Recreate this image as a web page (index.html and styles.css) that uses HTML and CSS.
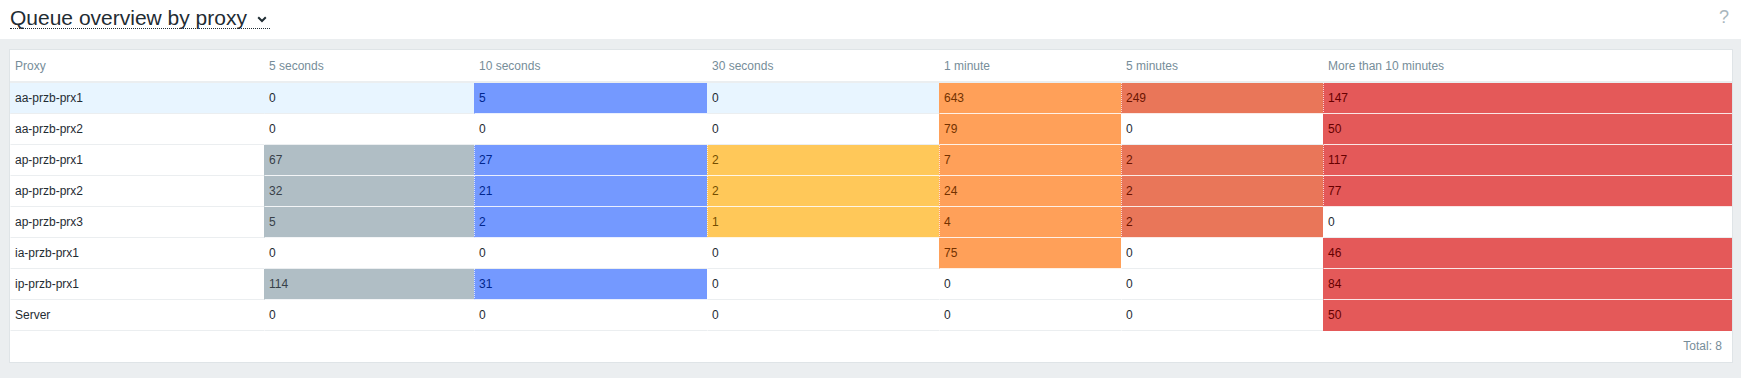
FILE: index.html
```html
<!DOCTYPE html>
<html lang="en">
<head>
<meta charset="utf-8">
<title>Queue overview by proxy</title>
<link rel="stylesheet" href="styles.css">
</head>
<body>
<header class="page-header">
  <h1 class="title"><span class="title-link">Queue overview by proxy<svg class="chevron" width="10" height="7" viewBox="0 0 10 7"><path d="M1.2 1.3 L5 5 L8.8 1.3" fill="none" stroke="#1f2c33" stroke-width="2"/></svg></span></h1>
  <span class="help">?</span>
</header>
<main class="content">
  <div class="panel">
    <table class="list">
      <colgroup>
        <col class="w-proxy"><col class="w-5s"><col class="w-10s"><col class="w-30s"><col class="w-1m"><col class="w-5m"><col class="w-10m">
      </colgroup>
      <thead>
        <tr><th>Proxy</th><th>5 seconds</th><th>10 seconds</th><th>30 seconds</th><th>1 minute</th><th>5 minutes</th><th>More than 10 minutes</th></tr>
      </thead>
      <tbody>
        <tr class="hover"><td>aa-przb-prx1</td><td>0</td><td class="bg c-blue">5</td><td>0</td><td class="bg c-orange">643</td><td class="bg c-coral">249</td><td class="bg c-red">147</td></tr>
        <tr><td>aa-przb-prx2</td><td>0</td><td>0</td><td>0</td><td class="bg c-orange">79</td><td>0</td><td class="bg c-red">50</td></tr>
        <tr><td>ap-przb-prx1</td><td class="bg c-gray">67</td><td class="bg c-blue">27</td><td class="bg c-yellow">2</td><td class="bg c-orange">7</td><td class="bg c-coral">2</td><td class="bg c-red">117</td></tr>
        <tr><td>ap-przb-prx2</td><td class="bg c-gray">32</td><td class="bg c-blue">21</td><td class="bg c-yellow">2</td><td class="bg c-orange">24</td><td class="bg c-coral">2</td><td class="bg c-red">77</td></tr>
        <tr><td>ap-przb-prx3</td><td class="bg c-gray">5</td><td class="bg c-blue">2</td><td class="bg c-yellow">1</td><td class="bg c-orange">4</td><td class="bg c-coral">2</td><td>0</td></tr>
        <tr><td>ia-przb-prx1</td><td>0</td><td>0</td><td>0</td><td class="bg c-orange">75</td><td>0</td><td class="bg c-red">46</td></tr>
        <tr><td>ip-przb-prx1</td><td class="bg c-gray">114</td><td class="bg c-blue">31</td><td>0</td><td>0</td><td>0</td><td class="bg c-red">84</td></tr>
        <tr><td>Server</td><td>0</td><td>0</td><td>0</td><td>0</td><td>0</td><td class="bg c-red">50</td></tr>
      </tbody>
    </table>
    <div class="paging">Total: 8</div>
  </div>
</main>
</body>
</html>
```
FILE: styles.css
```css
html, body {
  margin: 0;
  padding: 0;
}
body {
  background: #ebeef0;
  font-family: "Liberation Sans", Arial, sans-serif;
  font-size: 12px;
  color: #1f2c33;
}
.page-header {
  height: 39px;
  box-sizing: border-box;
  background: #fff;
  padding: 0 12px 0 10px;
  display: flex;
  justify-content: space-between;
  align-items: flex-start;
}
.title {
  margin: 0;
  padding-top: 8px;
  font-size: 21px;
  font-weight: normal;
  line-height: 20px;
  color: #1f2c33;
}
.title-link {
  display: inline-block;
  border-bottom: 1px dotted #1f2c33;
  padding-right: 3px;
}
.chevron {
  margin-left: 10px;
  vertical-align: middle;
}
.help {
  padding-top: 7px;
  font-size: 18px;
  line-height: 20px;
  color: #a9b6bd;
}
.content {
  padding: 10px 8px 16px 9px;
}
.panel {
  background: #fff;
  border: 1px solid #dfe4e7;
}
.list {
  width: 100%;
  border-collapse: separate;
  border-spacing: 0;
  table-layout: fixed;
}
.w-proxy { width: 254px; }
.w-5s { width: 210px; }
.w-10s { width: 233px; }
.w-30s { width: 232px; }
.w-1m { width: 182px; }
.w-5m { width: 202px; }
.w-10m { width: 409px; }
.list th {
  text-align: left;
  font-weight: normal;
  color: #768d99;
  padding: 9px 5px 8px;
  line-height: 14px;
  border-bottom: 2px solid #ebeef0;
  white-space: nowrap;
}
.list td {
  padding: 8px 5px 8px 4px;
  line-height: 14px;
  border-bottom: 1px solid #ebeef0;
  border-left: 1px solid transparent;
  white-space: nowrap;
}
.list tr.hover td {
  background: #e8f5ff;
}
.list tbody tr:last-child td {
  border-bottom-color: #ebeef0;
}
.list td.bg {
  border-bottom-color: rgba(255, 255, 255, 0.85);
}
.list td.bg + td.bg {
  border-left: 1px dotted rgba(255, 255, 255, 0.75);
}
.list tr.hover td.c-gray, .c-gray { background: #b0bec5; color: #384149; }
.list tr.hover td.c-blue, .c-blue { background: #7499ff; color: #00268e; }
.list tr.hover td.c-yellow, .c-yellow { background: #ffc859; color: #734d00; }
.list tr.hover td.c-orange, .c-orange { background: #ffa059; color: #733200; }
.list tr.hover td.c-coral, .c-coral { background: #e97659; color: #6b1400; }
.list tr.hover td.c-red, .c-red { background: #e45959; color: #660000; }
.list tbody tr:last-child td.bg {
  border-bottom-color: transparent;
}
.paging {
  height: 31px;
  line-height: 31px;
  padding: 0 10px;
  text-align: right;
  color: #768d99;
}
```
